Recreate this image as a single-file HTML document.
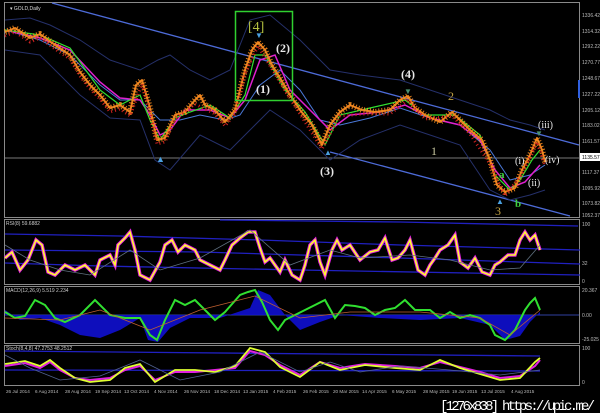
<!DOCTYPE html>
<html><head><meta charset="utf-8"><style>
html,body{margin:0;padding:0;background:#000;width:600px;height:413px;overflow:hidden}
svg{display:block}
text{font-family:"Liberation Sans",sans-serif}
.sf text{font-family:"Liberation Serif",serif}
</style></head><body>
<svg width="600" height="413" viewBox="0 0 600 413" xmlns="http://www.w3.org/2000/svg">
<rect width="600" height="413" fill="#000"/>
<g stroke="#8a8a8a" stroke-width="1" fill="none">
<rect x="4.5" y="2.5" width="575" height="215"/>
<rect x="4.5" y="219.5" width="575" height="65"/>
<rect x="4.5" y="286.5" width="575" height="57"/>
<rect x="4.5" y="345.5" width="575" height="40"/>
</g>
<line x1="5" y1="158" x2="579" y2="158" stroke="#777" stroke-width="1"/>
<line x1="52" y1="3" x2="579" y2="145" stroke="#4d6bd8" stroke-width="1.3"/>
<line x1="330" y1="152" x2="570" y2="216" stroke="#4d6bd8" stroke-width="1.3"/>
<polyline fill="none" stroke="#25306a" stroke-width="1" points="5,20 30,18 50,25 80,40 110,60 140,70 158,60 170,55 190,70 210,80 230,70 250,20 270,15 300,40 330,70 360,75 400,80 430,90 460,100 490,110 510,120 530,125 545,130"/>
<polyline fill="none" stroke="#25306a" stroke-width="1" points="5,50 40,55 80,95 110,118 140,120 155,160 170,170 200,135 230,150 250,130 270,110 300,130 330,160 360,140 400,125 430,135 460,145 490,190 510,200 530,195 545,190"/>
<polyline fill="none" stroke="#4a78d8" stroke-width="1" points="5,30 40,40 70,55 100,85 120,100 140,100 160,120 180,120 200,115 225,120 240,115 260,85 280,70 300,90 320,120 340,125 370,118 400,108 430,118 460,125 490,150 510,180 530,175 545,165"/>
<polyline fill="none" stroke="#e020d0" stroke-width="1.5" points="5,30 40,38 70,50 100,82 120,98 140,100 150,115 160,135 170,130 185,110 210,110 230,118 245,100 260,60 275,55 290,90 310,110 330,130 350,115 380,112 405,105 430,118 460,125 480,140 495,170 510,188 525,182 540,165"/>
<polyline fill="none" stroke="#30e030" stroke-width="1.2" points="5,30 40,35 70,48 100,90 120,105 140,95 150,120 160,140 175,118 190,112 210,105 230,118 245,95 255,55 265,55 285,90 305,112 325,145 340,115 370,108 405,100 425,115 455,115 480,135 495,175 510,190 520,180 532,160 540,150"/>
<polyline fill="none" stroke="#e88020" stroke-width="2" stroke-linejoin="round" points="5,32 15,28 30,38 40,34 55,45 70,55 80,72 90,85 100,95 110,108 120,105 130,112 136,85 142,80 150,108 157,140 165,138 175,115 185,112 195,100 200,95 205,105 215,110 225,122 235,110 245,70 252,50 258,42 265,50 272,65 280,78 290,95 300,110 312,125 322,145 330,125 340,112 350,105 362,110 375,112 390,110 400,100 408,96 415,108 425,115 440,122 452,112 460,120 470,130 482,140 490,160 497,185 505,192 515,188 522,170 530,155 537,138 542,150 545,162"/>
<polyline fill="none" stroke="#ff9020" stroke-width="6" stroke-dasharray="1 2" stroke-linejoin="round" opacity="0.85" points="5,32 15,28 30,38 40,34 55,45 70,55 80,72 90,85 100,95 110,108 120,105 130,112 136,85 142,80 150,108 157,140 165,138 175,115 185,112 195,100 200,95 205,105 215,110 225,122 235,110 245,70 252,50 258,42 265,50 272,65 280,78 290,95 300,110 312,125 322,145 330,125 340,112 350,105 362,110 375,112 390,110 400,100 408,96 415,108 425,115 440,122 452,112 460,120 470,130 482,140 490,160 497,185 505,192 515,188 522,170 530,155 537,138 542,150 545,162"/>
<polyline fill="none" stroke="#d02020" stroke-width="3" stroke-dasharray="1 3" points="5,36 15,32 30,42 40,38 55,49 70,59 80,76 90,89 100,99 110,112 120,109 130,116 142,84 150,112 157,144 165,142 175,119 195,104 215,114 225,126 235,114 245,74 258,46 272,69 290,99 300,114 322,149 340,116 362,114 390,114 408,100 425,119 452,116 470,134 490,164 505,196 522,174 537,142 545,166"/>
<text x="156" y="162" fill="#4aa0e0" font-size="9">▲</text>
<text x="255" y="38" fill="#4aa0e0" font-size="8">▼</text>
<text x="324" y="155" fill="#4aa0e0" font-size="8">▲</text>
<text x="404" y="94" fill="#4a9070" font-size="8">▼</text>
<text x="496" y="204" fill="#4aa0e0" font-size="8">▲</text>
<text x="535" y="136" fill="#4a9070" font-size="8">▼</text>
<rect x="235.5" y="11.5" width="57" height="89" fill="none" stroke="#30d030" stroke-width="1.5"/>
<g class="sf" font-size="12" font-weight="bold" fill="#e8e8e8">
<text x="248" y="31" fill="#b4c040" font-size="14" font-weight="normal">[4]</text>
<text x="276" y="52">(2)</text>
<text x="256" y="93">(1)</text>
<text x="320" y="175">(3)</text>
<text x="401" y="78">(4)</text>
<text x="448" y="100" fill="#c0a040" font-weight="normal">2</text>
<text x="431" y="155" fill="#c8c8a0" font-weight="normal">1</text>
<text x="538" y="128" font-size="10" font-weight="normal">(iii)</text>
<text x="515" y="164" font-size="10" font-weight="normal">(i)</text>
<text x="545" y="163" font-size="10" font-weight="normal">(iv)</text>
<text x="528" y="186" font-size="10" font-weight="normal">(ii)</text>
<text x="499" y="178" fill="#40d040" font-size="11">a</text>
<text x="515" y="207" fill="#40d040" font-size="11">b</text>
<text x="495" y="215" fill="#c0a040" font-weight="normal">3</text>
</g>
<text x="10" y="10" fill="#ddd" font-size="5">▾ GOLD,Daily</text>
<g fill="#bbb" font-size="5">
<text x="582" y="17">1336.42</text><text x="582" y="33">1314.32</text><text x="582" y="48">1292.22</text>
<text x="582" y="64">1270.77</text><text x="582" y="80">1248.67</text><text x="582" y="96">1227.22</text>
<text x="582" y="112">1205.12</text><text x="582" y="127">1183.02</text><text x="582" y="143">1161.57</text>
<text x="582" y="174">1117.37</text><text x="582" y="190">1095.92</text>
<text x="582" y="205">1073.82</text><text x="582" y="217">1052.37</text>
<text x="582" y="226">100</text><text x="582" y="265">32</text><text x="582" y="283">0</text>
<text x="582" y="292">20.367</text><text x="582" y="317">0.00</text><text x="582" y="341">-25.025</text>
<text x="582" y="350">100</text><text x="582" y="384">0</text>
</g>
<rect x="580" y="153" width="20" height="8" fill="#fff"/>
<text x="582" y="159" fill="#000" font-size="5">1135.57</text>
<rect x="578" y="80" width="2" height="18" fill="#3060e0"/>
<text x="6" y="225" fill="#ccc" font-size="5">RSI(8) 59.6882</text>
<polyline fill="none" stroke="#2020c0" stroke-width="1.3" points="5,234 120,236 260,240 400,245 580,250"/>
<polyline fill="none" stroke="#2020c0" stroke-width="1.3" points="5,250 200,252 400,258 580,264"/>
<polyline fill="none" stroke="#2020c0" stroke-width="1.3" points="5,263 100,266 300,270 580,275"/>
<polyline fill="none" stroke="#2020c0" stroke-width="1.3" points="220,220 400,222 578,226"/>
<polyline fill="none" stroke="#e020e0" stroke-width="3.5" points="5,258 12,252 20,270 28,260 36,240 42,245 48,272 55,275 65,265 75,270 85,265 95,275 100,260 110,255 115,265 118,245 125,238 130,232 135,250 140,275 150,280 160,262 165,245 172,240 178,252 185,245 195,250 200,260 210,265 220,270 225,260 232,245 240,238 248,232 255,232 260,248 265,262 270,258 280,272 285,260 292,275 300,280 305,265 310,245 315,240 320,262 325,275 332,250 337,240 342,250 350,245 360,260 370,252 378,250 385,238 392,260 398,258 405,250 410,240 418,270 425,275 430,265 435,258 440,250 448,245 455,235 460,262 468,268 475,258 482,272 490,275 495,265 500,262 508,255 515,255 520,240 525,232 530,240 535,235 540,250"/>
<polyline fill="none" stroke="#ffff30" stroke-width="1.6" points="5,258 12,252 20,270 28,260 36,240 42,245 48,272 55,275 65,265 75,270 85,265 95,275 100,260 110,255 115,265 118,245 125,238 130,232 135,250 140,275 150,280 160,262 165,245 172,240 178,252 185,245 195,250 200,260 210,265 220,270 225,260 232,245 240,238 248,232 255,232 260,248 265,262 270,258 280,272 285,260 292,275 300,280 305,265 310,245 315,240 320,262 325,275 332,250 337,240 342,250 350,245 360,260 370,252 378,250 385,238 392,260 398,258 405,250 410,240 418,270 425,275 430,265 435,258 440,250 448,245 455,235 460,262 468,268 475,258 482,272 490,275 495,265 500,262 508,255 515,255 520,240 525,232 530,240 535,235 540,250"/>
<polyline fill="none" stroke="#607080" stroke-width="0.8" points="5,245 30,260 60,270 90,275 130,250 160,270 200,258 250,230 290,265 330,250 360,258 410,255 450,260 490,270 520,268 540,245"/>
<text x="6" y="292" fill="#ccc" font-size="5">MACD(12,26,9) 5.519 2.234</text>
<line x1="5" y1="315" x2="579" y2="315" stroke="#3040a0" stroke-width="1"/>
<path d="M5,310 L20,320 L40,318 L60,325 L80,335 L100,338 L120,330 L140,318 L148,340 L158,342 L170,328 L190,318 L220,318 L250,308 L258,290 L270,295 L285,315 L300,330 L320,322 L340,315 L380,318 L420,320 L460,318 L490,325 L505,340 L520,336 L530,322 L540,312 L540,315 L5,315 Z" fill="#1010d0" opacity="0.9"/>
<polyline fill="none" stroke="#30e030" stroke-width="2" points="5,312 15,318 25,316 35,300 45,305 55,318 65,322 80,315 95,300 110,315 125,318 140,318 150,335 157,340 165,320 175,300 185,305 195,300 205,310 215,320 225,312 240,295 248,292 255,290 262,302 270,320 278,330 285,320 295,315 305,310 315,305 325,300 335,318 345,305 355,306 365,308 375,315 385,310 395,308 405,300 415,310 430,310 440,318 450,312 460,318 470,315 480,318 490,325 495,335 505,340 515,330 525,310 530,303 535,298 540,310"/>
<polyline fill="none" stroke="#c06030" stroke-width="0.8" points="5,318 60,320 100,310 150,330 200,310 255,296 300,318 350,312 420,312 480,318 510,335 540,310"/>
<text x="6" y="350" fill="#ccc" font-size="5">Stoch(8,4,8) 47.2753 48.2512</text>
<line x1="5" y1="351" x2="540" y2="356" stroke="#2020c0" stroke-width="1.3"/>
<line x1="5" y1="370" x2="540" y2="371" stroke="#2020c0" stroke-width="1.3"/>
<polyline fill="none" stroke="#e020e0" stroke-width="2" points="5,366 25,363 40,368 50,362 60,370 75,378 90,380 110,378 125,370 140,366 155,380 175,372 195,372 215,370 235,368 250,351 265,355 280,365 300,375 320,362 340,368 365,364 395,366 420,368 440,362 460,367 480,372 500,378 520,376 535,366 540,360"/>
<polyline fill="none" stroke="#e0ff30" stroke-width="1.8" points="5,364 25,361 40,366 50,360 60,368 75,378 90,382 110,380 125,368 140,364 155,382 175,370 195,370 215,372 235,366 250,348 265,352 280,367 300,377 320,362 340,370 365,365 395,368 420,370 440,360 460,368 480,374 500,380 520,378 535,362 540,358"/>
<polyline fill="none" stroke="#506090" stroke-width="0.8" points="5,355 30,368 60,380 100,376 140,360 180,380 220,372 260,352 300,372 330,362 360,372 400,366 450,370 500,375 540,370"/>
<g fill="#bbb" font-size="4.6">
<text x="6" y="393">26 Jul 2014</text><text x="35" y="393">6 Aug 2014</text><text x="65" y="393">28 Aug 2014</text>
<text x="95" y="393">19 Sep 2014</text><text x="124" y="393">13 Oct 2014</text><text x="154" y="393">4 Nov 2014</text>
<text x="184" y="393">26 Nov 2014</text><text x="214" y="393">18 Dec 2014</text><text x="243" y="393">13 Jan 2015</text>
<text x="273" y="393">4 Feb 2015</text><text x="303" y="393">26 Feb 2015</text><text x="333" y="393">20 Mar 2015</text>
<text x="362" y="393">14 Apr 2015</text><text x="392" y="393">6 May 2015</text><text x="423" y="393">28 May 2015</text>
<text x="452" y="393">19 Jun 2015</text><text x="481" y="393">13 Jul 2015</text><text x="511" y="393">4 Aug 2015</text>
</g>
<text x="440" y="410" fill="#fff" font-size="14" style="font-family:'Liberation Mono',monospace" textLength="155">[1276x838] https://upic.me/</text>
</svg>
</body></html>
